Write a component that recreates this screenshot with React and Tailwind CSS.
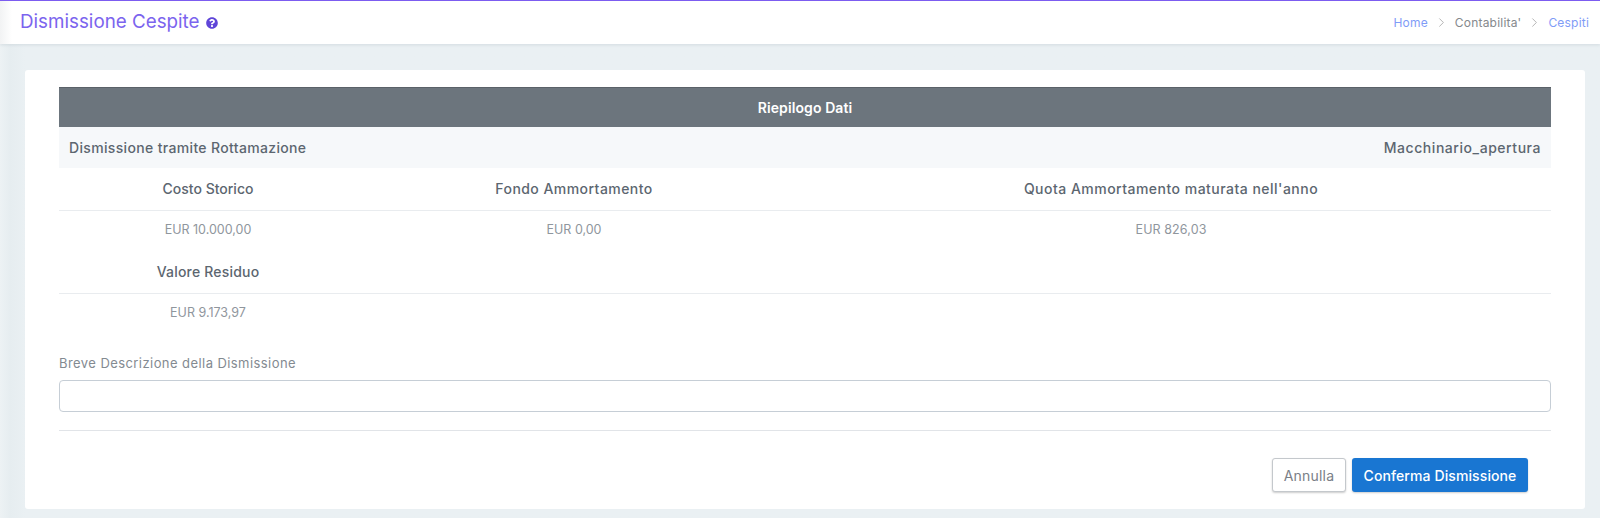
import { FaQuestionCircle } from "react-icons/fa";
import { ChevronRight } from "lucide-react";

function Head({ children, extra = "" }) {
  return <div className={`flex items-center justify-center text-[14px] font-medium text-[#5c6670] ${extra}`}>{children}</div>;
}
function Val({ children, extra = "" }) {
  return <div className={`flex h-[39px] items-center justify-center text-[12.5px] text-[#8f969d] ${extra}`}>{children}</div>;
}

export default function App() {
  return (
    <div className="relative flex h-[518px] w-[1600px] flex-col overflow-hidden bg-[#eaf0f3] font-['Inter','Noto_Sans',sans-serif]">
      <header className="z-10 flex h-[44px] shrink-0 items-center justify-between border-t border-[#7c5cf0] bg-gradient-to-r from-[#f2f3f4] to-white to-[12px] pl-5 pr-[11px] shadow-[0_1px_3px_rgba(120,140,155,0.2)]">
        <div className="flex items-center gap-[6px]">
          <h1 className="text-[18.8px] font-normal text-[#7b64ee]">Dismissione Cespite</h1>
          <FaQuestionCircle className="text-[#5f45d8]" size={12} />
        </div>
        <nav className="flex items-center text-[12px] tracking-[0.2px]">
          <span className="text-[#7f9cf7]">Home</span>
          <ChevronRight size={15} strokeWidth={1} className="mx-[6px] text-[#8a8a8a]" />
          <span className="text-[#85898d]">Contabilita'</span>
          <ChevronRight size={15} strokeWidth={1} className="mx-[6px] text-[#8a8a8a]" />
          <span className="text-[#7f9cf7]">Cespiti</span>
        </nav>
      </header>

      <main className="flex-1 bg-gradient-to-r from-[#edf2f4] via-[#e6edf0] via-[10px] to-[#eaf0f3] to-[25px] pl-[25px] pr-[15px] pt-[26px]">
        <section className="h-[439px] rounded-[3px] bg-white px-[34px] pt-[17px]">
          <div className="flex h-[40px] items-center justify-center border-t border-[#5a6168] bg-[#6c757d] text-[14px] font-semibold tracking-[0.1px] text-white">
            Riepilogo Dati
          </div>
          <div className="flex h-[41px] items-center justify-between bg-[#f6f8fa] px-[10px] text-[14px] font-medium text-[#5c6670]">
            <span className="tracking-[0.34px]">Dismissione tramite Rottamazione</span>
            <span className="tracking-[0.55px]">Macchinario_apertura</span>
          </div>

          <div className="grid grid-cols-[298px_434px_1fr]">
            <Head extra="h-[43px] pb-[2px] border-b border-[#e9ecef]">Costo Storico</Head>
            <Head extra="h-[43px] pb-[2px] border-b border-[#e9ecef] tracking-[0.45px]">Fondo Ammortamento</Head>
            <Head extra="h-[43px] pb-[2px] border-b border-[#e9ecef] tracking-[0.48px]">Quota Ammortamento maturata nell'anno</Head>
            <Val>EUR 10.000,00</Val>
            <Val>EUR 0,00</Val>
            <Val extra="tracking-[0.1px]">EUR 826,03</Val>
            <Head extra="h-[44px] pb-[1px] border-b border-[#e9ecef] tracking-[0.2px]">Valore Residuo</Head>
            <div className="border-b border-[#e9ecef]" />
            <div className="border-b border-[#e9ecef]" />
            <Val>EUR 9.173,97</Val>
          </div>

          <label className="mt-[21px] block text-[13px] leading-[18px] tracking-[0.43px] text-[#838a91]">
            Breve Descrizione della Dismissione
          </label>
          <input className="mt-[8px] block h-[32px] w-full rounded-[4px] border border-[#c6ced6] bg-white" />
          <hr className="mt-[18px] border-[#e1e4e8]" />

          <div className="mt-[27px] flex justify-end gap-[6px] pr-[23px]">
            <button className="h-[34px] w-[74px] rounded-[3px] border border-[#c4c8cc] bg-white text-[14px] tracking-[0.2px] text-[#7a8087] shadow-[0_1px_2px_rgba(0,0,0,0.2)]">
              Annulla
            </button>
            <button className="h-[34px] w-[176px] rounded-[3px] bg-[#1976d2] text-[14px] font-medium tracking-[0.1px] text-white shadow-[0_1px_2px_rgba(0,0,0,0.2)]">
              Conferma Dismissione
            </button>
          </div>
        </section>
      </main>
    </div>
  );
}
